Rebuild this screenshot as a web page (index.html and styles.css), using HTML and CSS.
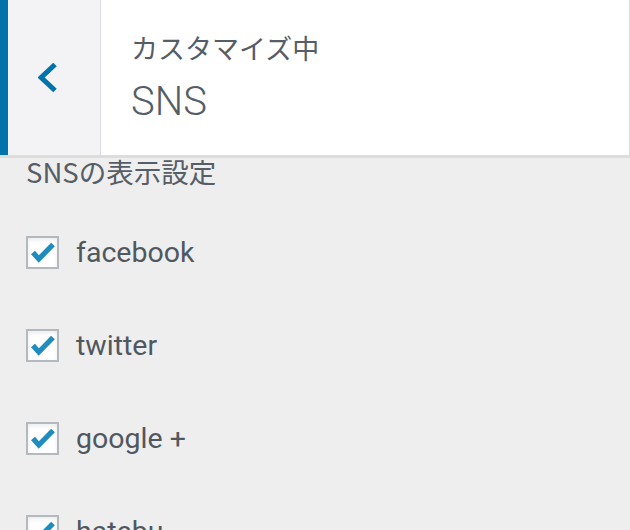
FILE: index.html
```html
<!DOCTYPE html>
<html lang="ja">
<head>
<meta charset="utf-8">
<title>SNS</title>
<link rel="stylesheet" href="styles.css">
</head>
<body>
<div class="header">
  <button class="back" type="button" aria-label="戻る">
    <svg class="chevron" width="20" height="30" viewBox="0 0 20 30"><polyline points="17,1.5 3.2,14.5 17,27.5" fill="none" stroke="#0073aa" stroke-width="5" stroke-linejoin="miter"/></svg>
  </button>
  <div class="title">
    <span class="action">カスタマイズ中</span>
    <h3 class="name">SNS</h3>
  </div>
</div>
<div class="content">
  <h4 class="group-title">SNSの表示設定</h4>
  <ul class="options">
    <li class="option"><span class="box"><svg width="33" height="33" viewBox="0 0 33 33"><polyline points="7,16.5 12.8,23 27,8.5" fill="none" stroke="#1e8cbe" stroke-width="5.2"/></svg></span><span class="label">facebook</span></li>
    <li class="option"><span class="box"><svg width="33" height="33" viewBox="0 0 33 33"><polyline points="7,16.5 12.8,23 27,8.5" fill="none" stroke="#1e8cbe" stroke-width="5.2"/></svg></span><span class="label">twitter</span></li>
    <li class="option"><span class="box"><svg width="33" height="33" viewBox="0 0 33 33"><polyline points="7,16.5 12.8,23 27,8.5" fill="none" stroke="#1e8cbe" stroke-width="5.2"/></svg></span><span class="label">google +</span></li>
    <li class="option"><span class="box"><svg width="33" height="33" viewBox="0 0 33 33"><polyline points="7,16.5 12.8,23 27,8.5" fill="none" stroke="#1e8cbe" stroke-width="5.2"/></svg></span><span class="label">hatebu</span></li>
  </ul>
</div>
</body>
</html>
```
FILE: styles.css
```css
html, body {
  margin: 0;
  padding: 0;
}
body {
  background: #eeeeee;
  width: 630px;
  height: 530px;
  overflow: hidden;
  font-family: "Noto Sans CJK JP", "Noto Sans", sans-serif;
  color: #555d66;
}
.header {
  display: flex;
  height: 155px;
  border-bottom: 3px solid #dddddd;
  background: #ffffff;
}
.back {
  width: 101px;
  box-sizing: border-box;
  margin: 0;
  padding: 0 0 0 30px;
  border: none;
  border-left: 8px solid #0073aa;
  border-right: 1px solid #dddddd;
  background: #f3f3f5;
  display: flex;
  align-items: center;
  justify-content: flex-start;
}
.chevron {
  display: block;
}
.title {
  flex: 1;
  border-right: 1px solid #dddddd;
  padding: 33px 0 0 30px;
  display: flex;
  flex-direction: column;
}
.action {
  font-size: 27px;
  line-height: 30px;
  color: #555d66;
}
.name {
  margin: 15px 0 0;
  font-family: Roboto, "Liberation Sans", sans-serif;
  font-weight: 300;
  font-size: 40px;
  line-height: 48px;
  color: #555d66;
}
.content {
  padding: 0 0 0 26px;
}
.group-title {
  margin: 0;
  font-size: 27.5px;
  line-height: 26px;
  font-weight: 400;
  color: #555d66;
}
.options {
  list-style: none;
  margin: 52px 0 0;
  padding: 0;
  display: flex;
  flex-direction: column;
  gap: 60px;
}
.option {
  display: flex;
  align-items: center;
  height: 33px;
  gap: 17px;
}
.box {
  width: 33px;
  height: 33px;
  box-sizing: border-box;
  border: 2px solid #b4b9be;
  background: #ffffff;
  box-shadow: inset 0 2px 4px rgba(0,0,0,0.08);
  position: relative;
  flex: none;
}
.box svg {
  position: absolute;
  left: -2px;
  top: -2px;
}
.label {
  font-family: Roboto, "Liberation Sans", sans-serif;
  font-size: 28.5px;
  line-height: 33px;
  color: #50575e;
}
```
